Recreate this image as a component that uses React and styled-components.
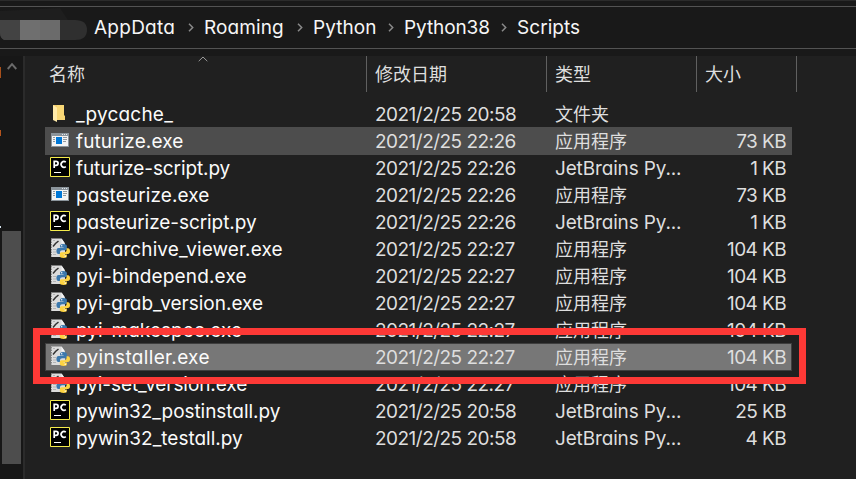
import React from 'react';
import styled, { createGlobalStyle, css } from 'styled-components';

const GlobalStyle = createGlobalStyle`
  * { box-sizing: border-box; }
  body {
    margin: 0;
    background: #202020;
    overflow: hidden;
  }
`;

const latin = css`
  font-family: Inter, 'Noto Sans CJK SC', sans-serif;
  font-feature-settings: 'cv11';
  font-size: 19px;
  font-weight: 375;
  white-space: pre;
`;

const Window = styled.div`
  width: 856px;
  height: 479px;
  display: flex;
  flex-direction: column;
  background: #191919;
  overflow: hidden;
`;

const TopStrip = styled.div`
  height: 6px;
  flex: none;
  background: #191919;
  border-top: 1px solid #2b2b2b;
`;

const AddressBar = styled.div`
  height: 43px;
  flex: none;
  display: flex;
  align-items: center;
  border-top: 1px solid #535353;
  border-bottom: 1px solid #535353;
`;

const MaskedUser = styled.svg`
  width: 88px;
  height: 41px;
  flex: none;
  margin-right: 6px;
`;

const Crumb = styled.span`
  ${latin}
  flex: none;
  width: ${(p) => p.$width}px;
  line-height: 41px;
  font-weight: 400;
  color: #f6f6f6;
  letter-spacing: ${(p) => p.$track}px;
`;

const CrumbArrow = styled.svg`
  width: 6px;
  height: 9px;
  flex: none;
  margin: 0 10px 1px 13px;
`;

const Body = styled.div`
  flex: 1;
  display: flex;
  margin-top: 7px;
`;

const NavPane = styled.div`
  position: relative;
  width: 23px;
  flex: none;
  display: flex;
  flex-direction: column;
  background: #171717;
`;

const ScrollUp = styled.svg`
  width: 10px;
  height: 8px;
  margin: 6px 0 0 7px;
`;

const ScrollThumb = styled.div`
  width: 19px;
  height: 233px;
  margin: 161px 0 0 2px;
  background: #4d4d4d;
`;

const ClippedIcon = styled.i`
  position: absolute;
  left: 0;
  top: ${(p) => p.$top}px;
  width: 1px;
  height: ${(p) => p.$height}px;
  background: ${(p) => p.$fill};
`;

const FilePane = styled.div`
  position: relative;
  flex: 1;
  border-left: 2px solid #2b2b2b;
  background: #202020;
`;

const HeaderRow = styled.div`
  display: grid;
  grid-template-columns: 342px 180px 150px 100px;
  height: 36px;
`;

const HeaderCell = styled.div`
  position: relative;
  padding-left: ${(p) => p.$inset}px;
  border-right: 1px solid #606060;
  font: 400 18px/34px 'Noto Sans CJK SC', sans-serif;
  color: #dedede;
`;

const SortArrow = styled.svg`
  position: absolute;
  left: 173px;
  top: 0;
  width: 10px;
  height: 6px;
`;

const Rows = styled.div`
  display: grid;
  grid-auto-rows: 27px;
  width: 747px;
  margin: 8px 0 0 20px;
`;

const Row = styled.div`
  display: grid;
  grid-template-columns: 31px 299px 180px 140px 91px;
  grid-template-rows: 28px;
  height: 28px;
  ${(p) => p.$state === 'hover' && css`background: #4d4d4d;`}
  ${(p) => p.$state === 'selected' && css`
    background: #777777;
    box-shadow: inset 0 0 0 1px #3e3e3e;
  `}
`;

const IconBox = styled.svg`
  width: 20px;
  height: 20px;
  margin: 3px 0 0 5px;
`;

const Cell = styled.span`
  ${latin}
  line-height: 30px;
  color: ${(p) => (p.$name ? '#fbfbfb' : '#dedede')};
  letter-spacing: ${(p) => p.$track || 0}px;
  text-align: ${(p) => (p.$right ? 'right' : 'left')};
`;

const TypeCell = styled(Cell)`
  ${(p) => p.$han && css`
    font-family: 'Noto Sans CJK SC', sans-serif;
    font-size: 18px;
    font-weight: 400;
    line-height: 26px;
  `}
`;

const Highlight = styled.div`
  position: absolute;
  left: 8px;
  top: 272px;
  width: 773px;
  height: 56px;
  border: 7px solid #fd3936;
`;

function Icon({ kind }) {
  if (kind === 'folder') {
    return (
      <IconBox viewBox="0 0 20 20">
        <path d="M3 2h11v10.5h1V17H6z" fill="#f3cd6b" />
        <path d="M7 2h7v11h1v4H7z" fill="#f8d776" />
        <path d="M3 2l4 2.6V19l-4-2z" fill="#ffeaa8" />
      </IconBox>
    );
  }
  if (kind === 'exe') {
    return (
      <IconBox viewBox="0 0 20 20" shapeRendering="crispEdges">
        <path d="M1 3h18v14H1z" fill="#8b949b" />
        <path d="M2 6h16v10H2z" fill="#f4f4f4" />
        <path d="M12 4h1v1h-1zM14 4h1v1h-1zM16 4h1v1h-1z" fill="#e4e8ea" />
        <path d="M6 7h6v7H6z" fill="#0078d7" />
        <path d="M3 7h2v1H3zM3 9h2v1H3zM3 11h2v1H3zM13 7h4v1h-4zM13 9h4v1h-4zM13 11h3v1h-3z" fill="#90989d" />
      </IconBox>
    );
  }
  if (kind === 'pycharm') {
    return (
      <IconBox viewBox="0 0 20 20">
        <path d="M.5.5h19v19H.5z" fill="#000" stroke="#f5ec4b" />
        <path d="M4.200 11V4.300h1.900a1.900 1.900 0 0 1 0 4H4.200" fill="none" stroke="#fff" strokeWidth="1.700" />
        <path d="M15.800 5.100a2.900 2.900 0 1 0 0 4.600" fill="none" stroke="#fff" strokeWidth="1.700" />
        <path d="M4 15h7v1H4z" fill="#fff" />
      </IconBox>
    );
  }
  return (
    <IconBox viewBox="0 0 20 20">
      <path d="M1 .5h10.500l3.500 5V19H1z" fill="#dcdcdc" />
      <path d="M11.500.5v5H15z" fill="#f4f4f4" />
      <path d="M1.500 1v18" stroke="#8a8a8a" strokeDasharray="1.500 1" />
      <path d="M3 8.500l2.500-3L8.500 3" stroke="#333" strokeWidth="1.500" fill="none" />
      <path d="M3 2.500h2M3 11.500h3M3 14h3M3 16.500h3" stroke="#b4b4b4" />
      <path d="M13.200 6c-2.700 0-3.200 1-3.200 2v1.400h3.500v.7H8.600c-1.400 0-2.200 1.200-2.200 3s.8 3 2 3H10v-1.700c0-1.300 1-2.200 2.200-2.200h3c1 0 1.700-.8 1.700-1.700V8c0-1.300-1.300-2-3.700-2z" fill="#3b78ad" />
      <path d="M13.700 20c2.700 0 3.200-1 3.200-2v-1.400h-3.500v-.6h4.500c1.300 0 2.100-1 2.100-2.700 0-2-.8-3-2-3h-1.400v1.700c0 1.300-1 2.200-2.100 2.200h-3c-1 0-1.700.8-1.700 1.700V18c0 1.300 1.300 2 3.900 2z" fill="#fdd342" />
      <circle cx="11.700" cy="7.700" r=".7" fill="#fff" />
      <circle cx="15.200" cy="18.200" r=".7" fill="#fff" />
    </IconBox>
  );
}

const CRUMBS = [
  { text: 'AppData', width: 81, track: 0.25 },
  { text: 'Roaming', width: 80, track: 0.1 },
  { text: 'Python', width: 62, track: 0.05 },
  { text: 'Python38', width: 84, track: -0.1 },
  { text: 'Scripts', width: 80, track: 0.05 },
];

const APP = '应用程序';
const JB = 'JetBrains Py...';
const FILES = [
  { icon: 'folder', name: '_pycache_', track: 0.2, date: '2021/2/25 20:58', type: '文件夹', size: '' },
  { icon: 'exe', name: 'futurize.exe', track: 0.1, date: '2021/2/25 22:26', type: APP, size: '73 KB', state: 'hover' },
  { icon: 'pycharm', name: 'futurize-script.py', track: -0.1, date: '2021/2/25 22:26', type: JB, size: '1 KB' },
  { icon: 'exe', name: 'pasteurize.exe', track: 0.1, date: '2021/2/25 22:26', type: APP, size: '73 KB' },
  { icon: 'pycharm', name: 'pasteurize-script.py', track: -0.07, date: '2021/2/25 22:26', type: JB, size: '1 KB' },
  { icon: 'python', name: 'pyi-archive_viewer.exe', track: 0.1, date: '2021/2/25 22:27', type: APP, size: '104 KB' },
  { icon: 'python', name: 'pyi-bindepend.exe', track: 0.15, date: '2021/2/25 22:27', type: APP, size: '104 KB' },
  { icon: 'python', name: 'pyi-grab_version.exe', track: 0, date: '2021/2/25 22:27', type: APP, size: '104 KB' },
  { icon: 'python', name: 'pyi-makespec.exe', track: 0.05, date: '2021/2/25 22:27', type: APP, size: '104 KB' },
  { icon: 'python', name: 'pyinstaller.exe', track: 0.33, date: '2021/2/25 22:27', type: APP, size: '104 KB', state: 'selected' },
  { icon: 'python', name: 'pyi-set_version.exe', track: -0.08, date: '2021/2/25 22:27', type: APP, size: '104 KB' },
  { icon: 'pycharm', name: 'pywin32_postinstall.py', track: -0.05, date: '2021/2/25 20:58', type: JB, size: '25 KB' },
  { icon: 'pycharm', name: 'pywin32_testall.py', track: 0, date: '2021/2/25 20:58', type: JB, size: '4 KB' },
];

export default function App() {
  return (
    <>
      <GlobalStyle />
      <Window>
        <TopStrip />
        <AddressBar>
          <MaskedUser viewBox="0 0 88 41">
            <path d="M0 4l60-3 8 12H0z" fill="#1e1e1e" />
            <path d="M0 13h75q12 0 12 10t-12 10H4q-4-2-4-7z" fill="#2f2f2f" />
            <path d="M0 13h20v20H4q-4-2-4-7z" fill="#434343" />
            <path d="M20 13h20v20H20z" fill="#6f6f6f" />
            <path d="M40 13h20v20H40z" fill="#6b6b6b" />
          </MaskedUser>
          {CRUMBS.map((c, i) => (
            <React.Fragment key={c.text}>
              <Crumb $width={c.width} $track={c.track}>{c.text}</Crumb>
              {i < CRUMBS.length - 1 && (
                <CrumbArrow viewBox="0 0 6 9">
                  <path d="M1 .8l3.700 3.700L1 8.200" fill="none" stroke="#8a8a8a" strokeWidth="1.500" />
                </CrumbArrow>
              )}
            </React.Fragment>
          ))}
        </AddressBar>
        <Body>
          <NavPane>
            <ScrollUp viewBox="0 0 10 8">
              <path d="M.7 7L5 2.200 9.300 7" fill="none" stroke="#6b6b6b" strokeWidth="2" />
            </ScrollUp>
            <ScrollThumb />
            <ClippedIcon $top={11} $height={11} $fill="#a8501b" />
            <ClippedIcon $top={74} $height={6} $fill="#b5541d" />
            <ClippedIcon $top={170} $height={2} $fill="#d5e4ee" />
          </NavPane>
          <FilePane>
            <HeaderRow>
              <HeaderCell $inset={24}>
                名称
                <SortArrow viewBox="0 0 10 6">
                  <path d="M.7 5.200L5 1l4.300 4.200" fill="none" stroke="#9a9a9a" />
                </SortArrow>
              </HeaderCell>
              <HeaderCell $inset={8}>修改日期</HeaderCell>
              <HeaderCell $inset={8}>类型</HeaderCell>
              <HeaderCell $inset={8}>大小</HeaderCell>
            </HeaderRow>
            <Rows>
              {FILES.map((f) => (
                <Row key={f.name} $state={f.state}>
                  <Icon kind={f.icon} />
                  <Cell $name $track={f.track}>{f.name}</Cell>
                  <Cell $track={-0.52}>{f.date}</Cell>
                  <TypeCell $han={f.type !== JB} $track={f.type === JB ? -0.15 : 0}>{f.type}</TypeCell>
                  <Cell $right $track={-0.6}>{f.size}</Cell>
                </Row>
              ))}
            </Rows>
            <Highlight />
          </FilePane>
        </Body>
      </Window>
    </>
  );
}
